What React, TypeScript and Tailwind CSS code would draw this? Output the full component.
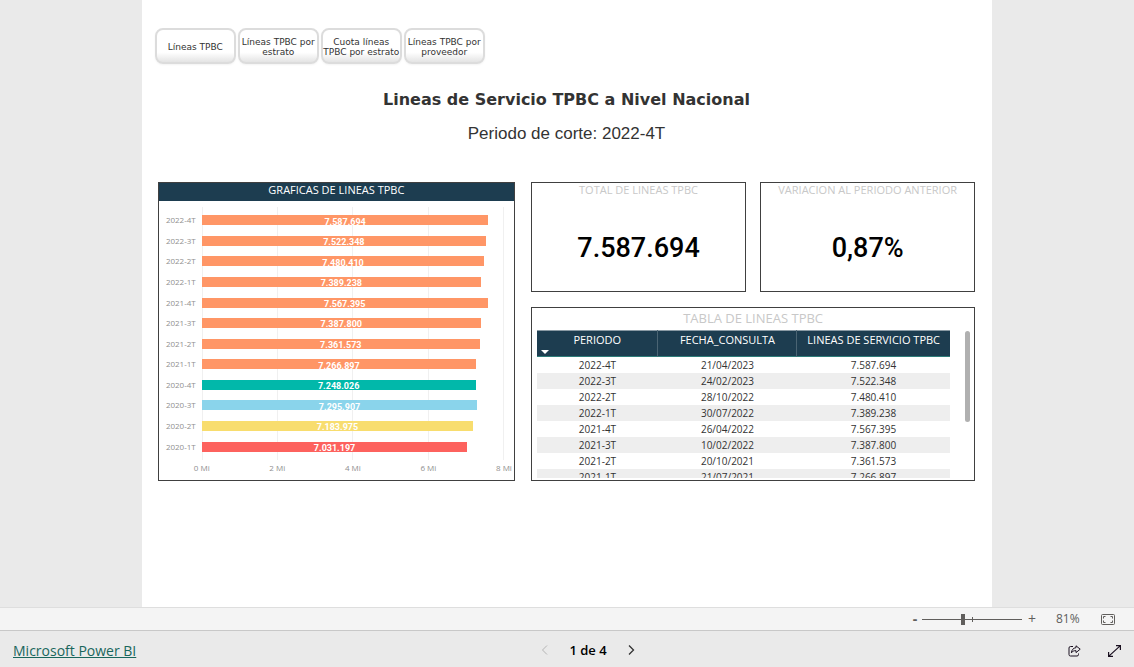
import { useState } from "react";

const tabs = ["Líneas TPBC", "Líneas TPBC por estrato", "Cuota líneas TPBC por estrato", "Líneas TPBC por proveedor"];

const periods = [
  { period: "2022-4T", date: "21/04/2023", lines: 7587694, color: "bg-[#ff9666]" },
  { period: "2022-3T", date: "24/02/2023", lines: 7522348, color: "bg-[#ff9666]" },
  { period: "2022-2T", date: "28/10/2022", lines: 7480410, color: "bg-[#ff9666]" },
  { period: "2022-1T", date: "30/07/2022", lines: 7389238, color: "bg-[#ff9666]" },
  { period: "2021-4T", date: "26/04/2022", lines: 7567395, color: "bg-[#ff9666]" },
  { period: "2021-3T", date: "10/02/2022", lines: 7387800, color: "bg-[#ff9666]" },
  { period: "2021-2T", date: "20/10/2021", lines: 7361573, color: "bg-[#ff9666]" },
  { period: "2021-1T", date: "21/07/2021", lines: 7266897, color: "bg-[#ff9666]" },
  { period: "2020-4T", date: "", lines: 7248026, color: "bg-[#01b8aa]" },
  { period: "2020-3T", date: "", lines: 7295907, color: "bg-[#8ad4eb]" },
  { period: "2020-2T", date: "", lines: 7183975, color: "bg-[#f8dd6e]" },
  { period: "2020-1T", date: "", lines: 7031197, color: "bg-[#fd625e]" },
];

const axisMax = 8000000;
const axisTicks = ["0 Mi", "2 Mi", "4 Mi", "6 Mi", "8 Mi"];

function formatLines(n: number) {
  return String(n).replace(/\B(?=(\d{3})+$)/g, ".");
}

function StatCard({ title, value }: { title: string; value: string }) {
  return (
    <section className="h-[110px] border border-[#404040] bg-white text-center">
      <h2 className="text-[11px] leading-[14px] text-[#c8c8c8]">{title}</h2>
      <p className="pt-[33px] font-['Roboto',sans-serif] text-[27px] leading-9 font-medium text-black">{value}</p>
    </section>
  );
}

function BarChart() {
  return (
    <section className="flex flex-col border border-[#404040] bg-white">
      <h2 className="h-[18px] bg-[#1d3d50] text-center text-[11px] leading-[14px] text-white">GRAFICAS DE LINEAS TPBC</h2>
      <div className="grid grid-cols-[37px_1fr] gap-x-[6px] pt-[6px] pr-[10px]">
        <div className="flex h-[253px] flex-col py-[3px] text-right text-[8px] text-[#8f8f8f]">
          {periods.map((p) => (
            <span key={p.period} className="flex flex-1 items-center justify-end">{p.period}</span>
          ))}
        </div>
        <div className="grid">
          <div className="col-start-1 row-start-1 flex justify-between">
            {axisTicks.map((t) => (
              <span key={t} className="w-px bg-[#f0f0f0]" />
            ))}
          </div>
          <div className="col-start-1 row-start-1 flex flex-col py-[3px]">
            {periods.map((p) => (
              <div key={p.period} className="flex flex-1 items-center">
                <div
                  className={`flex h-[10px] items-center justify-center pt-1 font-['Roboto',sans-serif] text-[9px] font-bold text-white ${p.color}`}
                  style={{ width: `${(p.lines / axisMax) * 100}%` }}
                >
                  {formatLines(p.lines)}
                </div>
              </div>
            ))}
          </div>
        </div>
        <div className="col-start-2 flex justify-between text-[8px] leading-4 text-[#8f8f8f]">
          {axisTicks.map((t) => (
            <span key={t} className="flex w-0 justify-center whitespace-nowrap">{t}</span>
          ))}
        </div>
      </div>
    </section>
  );
}

function LinesTable() {
  return (
    <section className="h-[174px] overflow-hidden border border-[#404040] bg-white pb-[3px]">
      <h2 className="h-[22px] text-center text-[13px] leading-5 text-[#c8c8c8]">TABLA DE LINEAS TPBC</h2>
      <div className="flex h-[148px] justify-between overflow-hidden pr-1 pl-[5px]">
        <table className="w-[413px] table-fixed border-collapse self-start text-center text-[#333]">
          <colgroup>
            <col className="w-[121px]" />
            <col className="w-[139px]" />
            <col />
          </colgroup>
          <thead className="bg-[#1d3d50] text-[11px] leading-[18px] text-white">
            <tr className="h-[26px] border-t border-b border-t-[#8a9aa4] border-b-[#2e7d7a] align-top">
              <th className="relative font-normal">
                PERIODO
                <svg className="absolute bottom-[2px] left-1" width="8" height="4" viewBox="0 0 8 4" aria-hidden="true">
                  <path d="M0 0h8L4 4z" fill="#fff" />
                </svg>
              </th>
              <th className="border-x border-[#4a6473] font-normal">FECHA_CONSULTA</th>
              <th className="font-normal">LINEAS DE SERVICIO TPBC</th>
            </tr>
          </thead>
          <tbody className="text-[10px] leading-4">
            {periods.slice(0, 8).map((p) => (
              <tr key={p.period} className="h-4 even:bg-[#eee]">
                <td>{p.period}</td>
                <td>{p.date}</td>
                <td>{formatLines(p.lines)}</td>
              </tr>
            ))}
          </tbody>
        </table>
        <div className="mt-px h-[91px] w-[5px] rounded-full bg-[#b0b0b0]" />
      </div>
    </section>
  );
}

export default function App() {
  const [zoom, setZoom] = useState(81);

  return (
    <div className="flex min-h-screen flex-col bg-[#eaeaea] font-['Open_Sans','Noto_Sans',sans-serif]">
      <main className="mx-auto w-3/4 flex-1 bg-white pt-7 pr-[17px] pl-4">
        <nav className="-ml-[3px] flex gap-[2px]">
          {tabs.map((t) => (
            <button
              key={t}
              className="h-9 w-[81px] rounded-lg border-2 border-[#dcdcdc] bg-linear-to-b from-white from-70% to-[#e4e4e4] pt-px font-['DejaVu_Sans',sans-serif] text-[9px] leading-[10px] text-[#333] shadow-xs"
            >
              {t}
            </button>
          ))}
        </nav>

        <header className="pt-6 text-center text-[#333]">
          <h1 className="font-['DejaVu_Sans',sans-serif] text-base leading-6 font-bold">Lineas de Servicio TPBC a Nivel Nacional</h1>
          <p className="pt-[10px] font-['Liberation_Sans',sans-serif] text-[17px] leading-6">Periodo de corte: 2022-4T</p>
        </header>

        <div className="grid grid-cols-[357fr_444fr] gap-4 pt-9">
          <BarChart />
          <div className="flex flex-col gap-[15px]">
            <div className="grid grid-cols-2 gap-[14px]">
              <StatCard title="TOTAL DE LINEAS TPBC" value="7.587.694" />
              <StatCard title="VARIACION AL PERIODO ANTERIOR" value="0,87%" />
            </div>
            <LinesTable />
          </div>
        </div>
      </main>

      {/* Zoom bar */}
      <div className="flex h-6 items-center justify-end border-y border-t-[#dedede] border-b-[#c8c8c8] bg-[#f4f4f4] pr-[19px] text-[#605e5c]">
        <button aria-label="Alejar" className="w-3 text-sm leading-4 font-bold">-</button>
        <div className="ml-px grid w-[100px] items-center">
          <span className="col-start-1 row-start-1 h-px bg-[#605e5c]" />
          <span className="col-start-1 row-start-1 h-[5px] w-px justify-self-center bg-[#605e5c]" />
          <input
            type="range"
            min={0}
            max={200}
            value={zoom}
            onChange={(e) => setZoom(Number(e.target.value))}
            aria-label="Zoom"
            className="col-start-1 row-start-1 h-[11px] w-full appearance-none bg-transparent [&::-webkit-slider-thumb]:h-[11px] [&::-webkit-slider-thumb]:w-1 [&::-webkit-slider-thumb]:appearance-none [&::-webkit-slider-thumb]:bg-[#605e5c]"
          />
        </div>
        <button aria-label="Acercar" className="ml-1 w-3 text-sm leading-4">+</button>
        <span className="ml-[18px] w-[45px] text-xs leading-4">{zoom}%</span>
        <button aria-label="Ajustar a la página">
          <svg width="14" height="11" viewBox="0 0 14 11" fill="none" stroke="currentColor">
            <rect x="0.5" y="0.5" width="13" height="10" rx="1" />
            <path d="M4.5 2.5h-2v2M2.5 6.5v2h2M9.5 2.5h2v2M11.5 6.5v2h-2" />
          </svg>
        </button>
      </div>

      {/* Status bar */}
      <footer className="grid h-9 grid-cols-3 items-center px-[13px]">
        <a href="https://powerbi.microsoft.com" className="justify-self-start pt-1 text-sm leading-5 text-[#19665c] underline">
          Microsoft Power BI
        </a>
        <div className="flex items-center justify-center gap-[21px] pt-[2px] pl-[42px] text-[13px] leading-5 text-black">
          <button aria-label="Página anterior" disabled className="text-[#b4b4b4]">
            <svg width="7" height="10" viewBox="0 0 7 10" fill="none" stroke="currentColor">
              <path d="M6 0.5L1.5 5L6 9.5" />
            </svg>
          </button>
          <span className="font-semibold">1 de 4</span>
          <button aria-label="Página siguiente" className="text-[#333]">
            <svg width="7" height="10" viewBox="0 0 7 10" fill="none" stroke="currentColor" strokeWidth="1.3">
              <path d="M1 0.5L5.5 5L1 9.5" />
            </svg>
          </button>
        </div>
        <div className="flex items-center justify-end gap-[27px] pt-1 text-[#1a1020]">
          <button aria-label="Compartir">
            <svg width="13" height="12" viewBox="0 0 13 12" fill="none" stroke="currentColor" strokeLinejoin="round">
              <path d="M5 1.5H2.5A1.5 1.5 0 0 0 1 3v6.5A1.5 1.5 0 0 0 2.5 11H9a1.5 1.5 0 0 0 1.5-1.5V8.5" />
              <path d="M8 0.8L12.2 4.2L8 7.6V5.7C5.8 5.5 4.5 6.3 3.4 7.8C3.6 5 5.3 2.9 8 2.7z" />
            </svg>
          </button>
          <button aria-label="Pantalla completa">
            <svg width="13" height="12" viewBox="0 0 13 12" fill="none" stroke="currentColor" strokeWidth="1.2">
              <path d="M8 0.6h4.4v4.4M12.4 0.6L0.6 11.4M0.6 7v4.4H5" />
            </svg>
          </button>
        </div>
      </footer>
    </div>
  );
}
